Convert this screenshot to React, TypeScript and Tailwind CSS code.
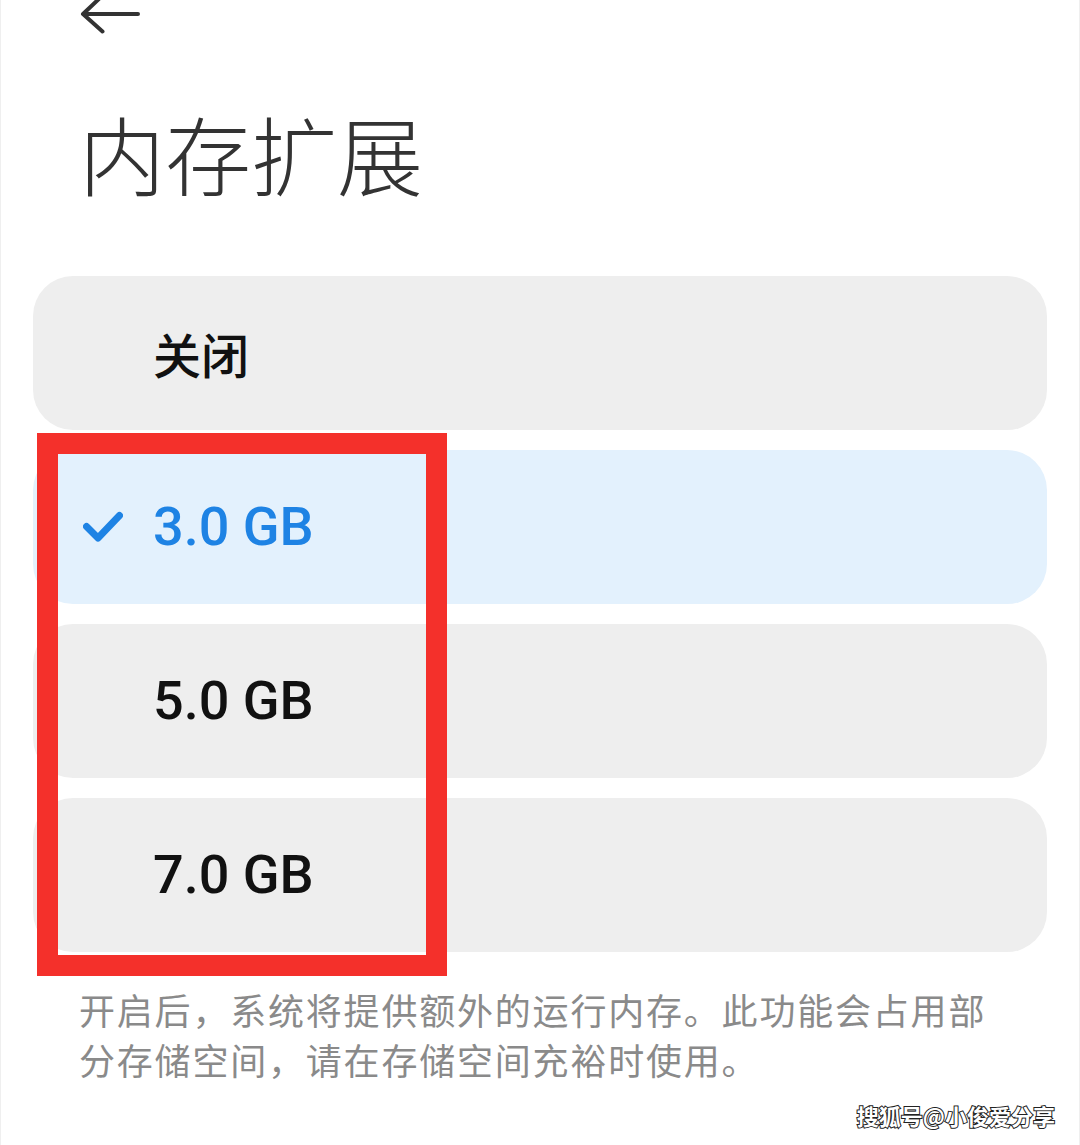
const options = [
  { label: "关闭", cjk: true, selected: false },
  { label: "3.0 GB", cjk: false, selected: true },
  { label: "5.0 GB", cjk: false, selected: false },
  { label: "7.0 GB", cjk: false, selected: false },
];

function BackArrow() {
  return (
    <svg width="62" height="42" viewBox="0 0 62 42" className="ml-[78px] mt-[-8px] block" fill="none">
      <path d="M4 22 H59 M23 4 L4 22 L23.5 39.5" stroke="#333333" strokeWidth="4" strokeLinecap="round" strokeLinejoin="round" />
    </svg>
  );
}

function Check() {
  return (
    <svg width="40" height="34" viewBox="0 0 40 34" fill="none" className="block">
      <path d="M3.5 16.5 L15 28 L36.5 5.5" stroke="#1e83e4" strokeWidth="7" strokeLinecap="round" strokeLinejoin="round" />
    </svg>
  );
}

export default function App() {
  return (
    <div className="relative h-[1145px] w-[1080px] overflow-hidden border-x border-[#efefef] bg-white font-['Noto_Sans_CJK_SC',sans-serif]">
      <BackArrow />

      <h1 className="mt-[76px] pl-[78px] text-[86px] font-light leading-none text-[#333333]">内存扩展</h1>

      <div className="mt-[80px] flex flex-col gap-[20px] px-[32px]">
        {options.map((o) => (
          <div
            key={o.label}
            className={
              o.selected
                ? "flex h-[154px] items-center rounded-[40px] bg-[#e3f1fd] pl-[50px]"
                : "flex h-[154px] items-center rounded-[40px] bg-[#eeeeee] pl-[50px]"
            }
          >
            <div className="flex w-[70px] items-center">{o.selected && <Check />}</div>
            {o.cjk ? (
              <span className="text-[48px] font-medium leading-none text-[#111111]">{o.label}</span>
            ) : (
              <span
                className={
                  o.selected
                    ? "font-['Roboto',sans-serif] text-[54px] font-medium leading-none text-[#1e83e4]"
                    : "font-['Roboto',sans-serif] text-[54px] font-medium leading-none text-[#111111]"
                }
              >
                {o.label}
              </span>
            )}
          </div>
        ))}
      </div>

      <p className="mt-[32px] pl-[78px] text-[36px] leading-[50px] tracking-[1.8px] text-[#8a8a8a]">
        <span className="block">开启后，系统将提供额外的运行内存。此功能会占用部</span>
        <span className="block">分存储空间，请在存储空间充裕时使用。</span>
      </p>

      {/* red annotation box */}
      <div className="absolute left-[36px] top-[433px] h-[543px] w-[410px] border-[21px] border-[#f4302b]" />

      {/* watermark */}
      <span className="absolute right-[24px] top-[1104px] text-[22px] font-bold leading-none text-white [-webkit-text-stroke:2px_#222] [paint-order:stroke_fill]">
        搜狐号@小俊爱分享
      </span>
    </div>
  );
}
